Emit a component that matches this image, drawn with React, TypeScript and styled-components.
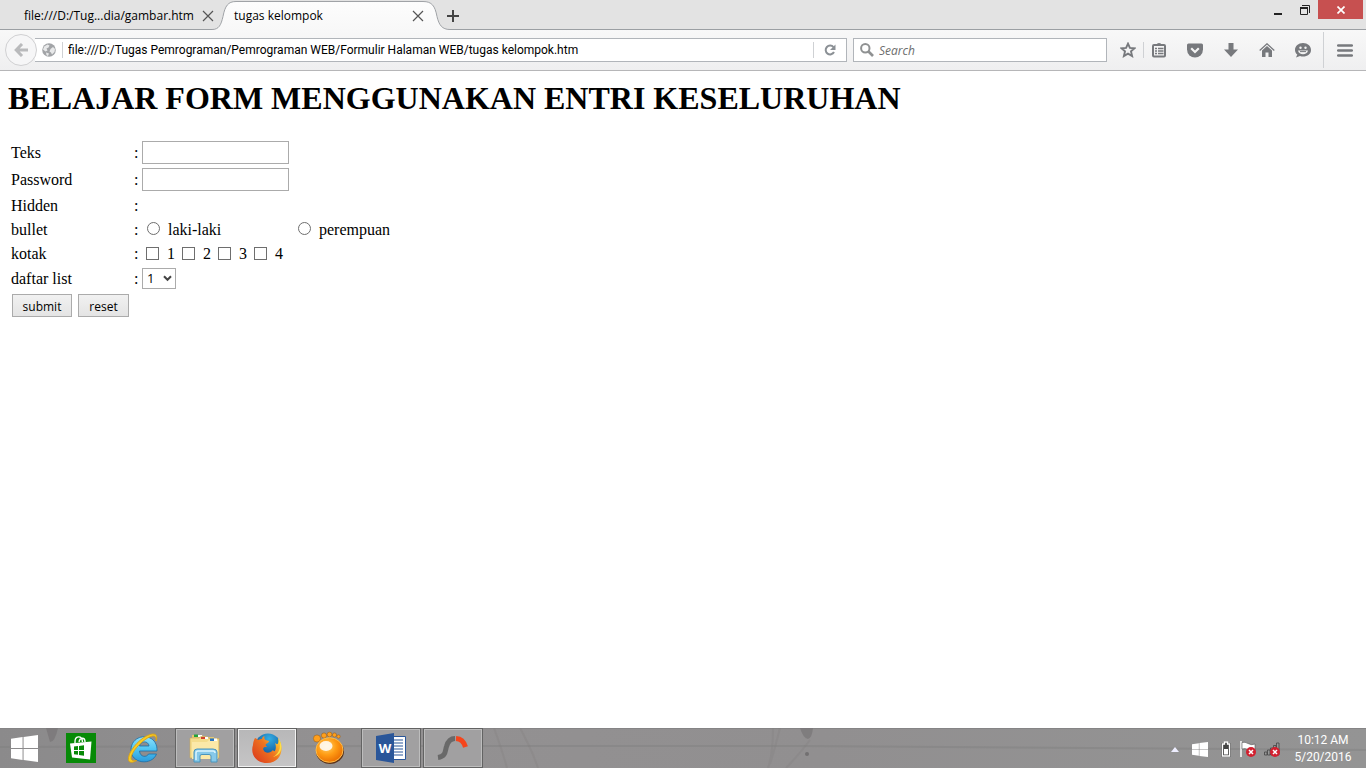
import React from "react";
import styled, { createGlobalStyle, css } from "styled-components";

const ui = `"Open Sans", "Noto Sans", sans-serif`;
const narrowUi = `Roboto, "Open Sans", sans-serif`;
const serif = `"Liberation Serif", "Times New Roman", serif`;

const GlobalStyle = createGlobalStyle`
  * { box-sizing: border-box; }
  html, body, #root { height: 100%; margin: 0; }
  body { background: #fff; color: #000; }
  button, input, select { margin: 0; padding: 0; border: 0; border-radius: 0; color: inherit; font: inherit; background: none; outline: none; }
  svg { display: block; flex: none; }
`;

const Window = styled.div`
  display: flex;
  flex-direction: column;
  min-height: 100%;
`;

/* ---------- browser chrome ---------- */

const TabStrip = styled.header`
  display: flex;
  height: 30px;
  background: #e3e3e3;
  box-shadow: inset 0 -1px #9b9fa3;
  font: 12px/16px ${ui};
`;

const Tab = styled.div<{ $active?: boolean }>`
  position: relative;
  display: flex;
  align-items: center;
  justify-content: space-between;
  width: ${(p) => (p.$active ? 238 : 216)}px;
  height: 30px;
  margin-left: ${(p) => (p.$active ? "-4px" : 0)};
  padding: ${(p) => (p.$active ? "2px 25px 0 22px" : "2px 1px 0 24px")};
  white-space: nowrap;
`;

const TabShape = styled.svg`
  position: absolute;
  inset: 0;
`;

const TabTitle = styled.span`
  position: relative;
`;

const IconButton = styled.button<{ $width: number }>`
  position: relative;
  display: flex;
  align-items: center;
  justify-content: center;
  flex: none;
  width: ${(p) => p.$width}px;
  height: 24px;
`;

const NewTab = styled(IconButton)`
  height: 30px;
  padding-top: 2px;
  margin-left: -11px;
`;

const WindowControls = styled.div`
  display: flex;
  margin-left: auto;
  padding-right: 3px;
`;

const WindowButton = styled(IconButton)<{ $close?: boolean }>`
  height: 19px;
  background: ${(p) => (p.$close ? "#c75050" : "transparent")};
`;

const Toolbar = styled.nav`
  display: flex;
  align-items: center;
  height: 41px;
  padding-left: 5px;
  background: linear-gradient(#f8f8f8, #efeff0);
  border-bottom: 1px solid #b6b6b8;
  font: 12px/16px ${ui};
`;

const BackButton = styled(IconButton)`
  z-index: 1;
  height: 32px;
  margin-right: -2px;
  border: 1px solid #d0d0d2;
  border-radius: 50%;
  background: #f6f6f7;
`;

const fieldBox = css`
  display: flex;
  align-items: center;
  height: 24px;
  background: #fff;
  border: 1px solid #b1b5ba;
`;

const AddressBar = styled.div`
  ${fieldBox}
  flex: 1;
  min-width: 0;
  border-left: 0;
  padding-left: 7px;
`;

const AddressInput = styled.input`
  flex: 1;
  min-width: 0;
  height: 20px;
  padding-left: 5px;
  font-family: ${narrowUi};
`;

const SearchBar = styled.label`
  ${fieldBox}
  flex: 0 1 254px;
  margin: 0 6px;
  padding-left: 6px;
`;

const SearchInput = styled.input`
  flex: 1;
  min-width: 0;
  height: 20px;
  padding-left: 5px;
  &::placeholder { color: #6d6d6d; font-style: italic; opacity: 1; }
`;

const Divider = styled.span<{ $h: number; $gap?: string }>`
  flex: none;
  width: 1px;
  height: ${(p) => p.$h}px;
  margin: ${(p) => p.$gap || "0"};
  background: #cfd1d4;
`;

/* ---------- page ---------- */

const Page = styled.main`
  flex: 1;
  padding: 9px 8px 0;
  background: #fff;
  font: 16px/18px ${serif};
`;

const Heading = styled.h1`
  margin: 0 0 21px;
  font: bold 32px/37px ${serif};
`;

const FormTable = styled.table`
  border-spacing: 2px;
`;

const Row = styled.tr<{ $h: number }>`
  height: ${(p) => p.$h}px;
`;

const LabelCell = styled.th`
  width: 121px;
  padding: 1px;
  font-weight: normal;
  text-align: left;
`;

const Cell = styled.td`
  padding: 0 1px;
`;

const Line = styled.div`
  display: flex;
  align-items: center;
`;

const Colon = styled.span`
  width: 8px;
`;

const TextField = styled.input`
  width: 147px;
  height: 23px;
  padding: 0 3px;
  border: 1px solid #ababab;
`;

const Choice = styled.label<{ $width: number; $inset: number }>`
  display: flex;
  align-items: center;
  gap: 8px;
  width: ${(p) => p.$width}px;
  padding-left: ${(p) => p.$inset}px;
`;

const Tick = styled.input`
  appearance: none;
  flex: none;
  width: 13px;
  height: 13px;
  margin-bottom: 2px;
  background: #fff;
  border: 1px solid #6e6e6e;
  &[type="radio"] { margin-bottom: 4px; border-radius: 50%; }
  &:checked { background: #333; box-shadow: inset 0 0 0 2px #fff; }
`;

const SelectBox = styled.div`
  position: relative;
`;

const Select = styled.select`
  appearance: none;
  display: block;
  width: 34px;
  height: 21px;
  padding-left: 4px;
  border: 1px solid #ababab;
  background: #fff;
  font: 13px/19px ${ui};
`;

const SelectArrow = styled.svg`
  position: absolute;
  top: 7px;
  right: 4px;
  pointer-events: none;
`;

const FormButton = styled.button<{ $width: number }>`
  width: ${(p) => p.$width}px;
  height: 23px;
  padding-top: 2px;
  border: 1px solid #ababab;
  background: linear-gradient(#f1f1f1, #e4e4e4);
  font: 12px/19px ${ui};
`;

const Buttons = styled.div`
  display: flex;
  gap: 6px;
  padding: 0 1px;
`;

/* ---------- taskbar ---------- */

const Taskbar = styled.footer`
  position: relative;
  display: flex;
  height: 40px;
  overflow: hidden;
  background: linear-gradient(90deg, #8b8a8b, #939192 25%, #918f90 60%, #949494);
  box-shadow: inset 0 1px #858485;
`;

const Wallpaper = styled.svg`
  position: absolute;
  inset: 0;
`;

const Apps = styled.div`
  position: relative;
  display: flex;
  gap: 2px;
`;

const TaskButton = styled.button<{ $state?: "open" | "front"; $start?: boolean }>`
  display: flex;
  align-items: center;
  justify-content: center;
  width: ${(p) => (p.$start ? 49 : 60)}px;
  height: 40px;
  ${(p) =>
    p.$state &&
    css`
      border: 1px solid #636363;
      box-shadow: inset 0 0 0 1px ${p.$state === "front" ? "#f2f2f2" : "#bdbdbd"};
      background: ${p.$state === "front" ? "linear-gradient(#b7b7b8, #c6c5c6)" : "#a1a0a1"};
    `}
`;

const Tray = styled.div`
  position: relative;
  display: flex;
  align-items: center;
  margin-left: auto;
  padding: 2px 7px 0 0;
`;

const Clock = styled.time`
  width: 72px;
  color: #fff;
  font: 12px/17px ${narrowUi};
  text-align: center;
  white-space: nowrap;
`;

const CloseX = () => (
  <svg width="12" height="12" viewBox="0 0 12 12" stroke="#555" strokeWidth="1.2">
    <path d="M1 1 11 11M11 1 1 11" />
  </svg>
);

const WinLogo = ({ size, h }: { size: number; h: number }) => (
  <svg width={size} height={h} viewBox="0 0 28 28" preserveAspectRatio="none" fill="#fff">
    <path d="M0 4 12 2.2V13.5H0zM13 2 28 0V13.5H13zM0 14.5H12V25.8L0 24zM13 14.5H28V28L13 26z" />
  </svg>
);

const RedX = () => (
  <>
    <circle cx="11" cy="11" r="5" fill="#d2202f" />
    <path d="M9 9 13 13M13 9 9 13" stroke="#fff" strokeWidth="1.5" />
  </>
);

const g = "#77797d";

function BrowserTabs() {
  return (
    <TabStrip>
      <Tab>
        <TabTitle>file:///D:/Tug...dia/gambar.htm</TabTitle>
        <IconButton $width={14} aria-label="Close tab"><CloseX /></IconButton>
      </Tab>
      <Tab $active>
        <TabShape width="238" height="30" viewBox="0 0 238 30">
          <defs>
            <linearGradient id="tab" x1="0" y1="0" x2="0" y2="1">
              <stop offset="0" stopColor="#fdfdfd" />
              <stop offset="1" stopColor="#f8f8f8" />
            </linearGradient>
          </defs>
          <path d="M0 30V29.5C7 29.5 9 25 11 16.5C13 6 16 1.5 24 1.5H211C220 1.5 223 6 225 16.5C227 25 230 29.5 238 29.5V30Z" fill="url(#tab)" />
          <path d="M0 29.5C7 29.5 9 25 11 16.5C13 6 16 1.5 24 1.5H211C220 1.5 223 6 225 16.5C227 25 230 29.5 238 29.5" fill="none" stroke="#a0a3a7" />
        </TabShape>
        <TabTitle>tugas kelompok</TabTitle>
        <IconButton $width={14} aria-label="Close tab"><CloseX /></IconButton>
      </Tab>
      <NewTab $width={28} aria-label="New tab">
        <svg width="12" height="12" viewBox="0 0 12 12" stroke="#444" strokeWidth="2"><path d="M6 0V12M0 6H12" /></svg>
      </NewTab>
      <WindowControls>
        <WindowButton $width={26} aria-label="Minimize">
          <svg width="10" height="12"><path d="M1 9h8v2H1z" fill="#222" /></svg>
        </WindowButton>
        <WindowButton $width={27} aria-label="Restore">
          <svg width="12" height="12" viewBox="0 0 12 12" fill="none" stroke="#222"><path d="M3 1.5H10.5V9" /><path d="M1.5 4H8.5V10.5H1.5z" /><path d="M1 4H9" strokeWidth="2" /></svg>
        </WindowButton>
        <WindowButton $width={45} $close aria-label="Close">
          <svg width="8" height="8" viewBox="0 0 8 8" stroke="#fff" strokeWidth="1.7"><path d="M.5 .5 7.5 7.5M7.5 .5 .5 7.5" /></svg>
        </WindowButton>
      </WindowControls>
    </TabStrip>
  );
}

function BrowserToolbar() {
  return (
    <Toolbar>
      <BackButton $width={32} aria-label="Back">
        <svg width="14" height="14" viewBox="0 0 14 14" fill="none" stroke="#b9babc" strokeWidth="3"><path d="M8 1 2.2 7 8 13M2.5 7H14" /></svg>
      </BackButton>
      <AddressBar>
        <svg width="14" height="14" viewBox="0 0 14 14">
          <circle cx="7" cy="7" r="6.8" fill="#a2a4a7" />
          <path d="M2.2 3.5 5.5 1.5 7.5 2.5 6.5 4.5 4.5 5.5 5.5 7.5 3.5 8.5 1 6.5zM8.5 6 11 4 13 6 12.5 9 10 11.5 9 9.5 7.5 8.5zM4 9.5 7 10.5 6 13 4.5 12.2z" fill="#e8e9ea" />
        </svg>
        <Divider $h={16} $gap="0 0 0 6px" />
        <AddressInput aria-label="Address" defaultValue="file:///D:/Tugas Pemrograman/Pemrograman WEB/Formulir Halaman WEB/tugas kelompok.htm" />
        <Divider $h={16} />
        <IconButton $width={32} aria-label="Reload">
          <svg width="12" height="12" viewBox="0 0 12 12"><path d="M9.5 3.2A4.4 4.4 0 1 0 10 8" fill="none" stroke="#8b9095" strokeWidth="2" /><path d="M11.5 .5V6H6z" fill="#8b9095" /></svg>
        </IconButton>
      </AddressBar>
      <SearchBar>
        <svg width="14" height="14" viewBox="0 0 14 14" fill="none" stroke="#8f9192"><circle cx="5.3" cy="5.3" r="4.2" strokeWidth="2" /><path d="M8.5 8.5 13 13" strokeWidth="2.6" /></svg>
        <SearchInput aria-label="Search" placeholder="Search" />
      </SearchBar>
      <IconButton $width={30} aria-label="Bookmark this page">
        <svg width="16" height="16" viewBox="0 0 16 16" fill="none" stroke={g} strokeWidth="1.9"><path d="M8 1.7 9.9 5.9 14.5 6.3 11 9.4 12.1 14 8 11.6 3.9 14 5 9.4 1.5 6.3 6.1 5.9z" /></svg>
      </IconButton>
      <Divider $h={16} $gap="0 -3px 0 0" />
      <IconButton $width={36} aria-label="Bookmarks">
        <svg width="14" height="16" viewBox="0 0 14 16"><path d="M4.5 3.5C4.5 .3 9.5 .3 9.5 3.5" fill={g} /><rect x="1" y="3" width="12" height="11.5" rx="1" fill="none" stroke={g} strokeWidth="2" /><path d="M3 6.5H5M6 6.5H11.5M3 9H5M6 9H11.5M3 11.5H5M6 11.5H11.5" stroke={g} strokeWidth="1.3" /></svg>
      </IconButton>
      <IconButton $width={36} aria-label="Pocket">
        <svg width="16" height="15" viewBox="0 0 16 15"><path d="M1.5 .5H14.5Q16 .5 16 2V6.5A8 8 0 0 1 0 6.5V2Q0 .5 1.5 .5z" fill={g} /><path d="M4.2 5.3 8 9 11.8 5.3" fill="none" stroke="#f4f4f4" strokeWidth="2.2" /></svg>
      </IconButton>
      <IconButton $width={36} aria-label="Downloads">
        <svg width="14" height="14" viewBox="0 0 14 14" fill={g}><path d="M4.5 0H9.5V6.5H14L7 14 0 6.5H4.5z" /></svg>
      </IconButton>
      <IconButton $width={36} aria-label="Home">
        <svg width="16" height="14" viewBox="0 0 16 14"><path d="M.7 7.5 8 .8 15.3 7.5" fill="none" stroke={g} strokeWidth="1.3" /><path d="M3 7.5 8 3 13 7.5V14H9.5V9.5H6.5V14H3z" fill={g} /></svg>
      </IconButton>
      <IconButton $width={36} aria-label="Chat">
        <svg width="16" height="15" viewBox="0 0 16 15"><path d="M8 0C12.6 0 16 3 16 6.9S12.6 13.5 8 13.5C7 13.5 6 13.4 5 13L1 14.5 2.3 11.5C.8 10.3 0 8.7 0 6.9 0 3 3.4 0 8 0z" fill={g} /><circle cx="5.5" cy="4.8" r="1.2" fill="#f2f2f2" /><circle cx="10.5" cy="4.8" r="1.2" fill="#f2f2f2" /><path d="M3 7.5H13C12.5 10 10.5 11.3 8 11.3S3.5 10 3 7.5z" fill="#f2f2f2" /><path d="M5 8.6H11" stroke={g} /></svg>
      </IconButton>
      <Divider $h={36} $gap="0 0 0 2px" />
      <IconButton $width={42} aria-label="Menu">
        <svg width="16" height="13" viewBox="0 0 16 13" stroke={g} strokeWidth="2.6" strokeLinecap="round"><path d="M1.2 1.5H14.8M1.2 6.5H14.8M1.2 11.5H14.8" /></svg>
      </IconButton>
    </Toolbar>
  );
}

function EntryForm() {
  return (
    <form onSubmit={(e) => e.preventDefault()}>
      <FormTable>
        <tbody>
          <Row $h={25}>
            <LabelCell><label htmlFor="teks">Teks</label></LabelCell>
            <Cell><Line><Colon>:</Colon><TextField id="teks" type="text" /></Line></Cell>
          </Row>
          <Row $h={25}>
            <LabelCell><label htmlFor="password">Password</label></LabelCell>
            <Cell><Line><Colon>:</Colon><TextField id="password" type="password" /></Line></Cell>
          </Row>
          <Row $h={23}>
            <LabelCell>Hidden</LabelCell>
            <Cell><Line><Colon>:</Colon><input type="hidden" name="hidden" /></Line></Cell>
          </Row>
          <Row $h={22}>
            <LabelCell>bullet</LabelCell>
            <Cell>
              <Line>
                <Colon>:</Colon>
                <Choice $width={151} $inset={5}><Tick type="radio" name="bullet" />laki-laki</Choice>
                <Choice $width={104} $inset={5}><Tick type="radio" name="bullet" />perempuan</Choice>
              </Line>
            </Cell>
          </Row>
          <Row $h={22}>
            <LabelCell>kotak</LabelCell>
            <Cell>
              <Line>
                <Colon>:</Colon>
                {[1, 2, 3, 4].map((n) => (
                  <Choice key={n} $width={36} $inset={4}><Tick type="checkbox" name="kotak" />{n}</Choice>
                ))}
              </Line>
            </Cell>
          </Row>
          <Row $h={23}>
            <LabelCell><label htmlFor="daftar">daftar list</label></LabelCell>
            <Cell>
              <Line>
                <Colon>:</Colon>
                <SelectBox>
                  <Select id="daftar"><option>1</option></Select>
                  <SelectArrow width="9" height="7" viewBox="0 0 9 7" fill="none" stroke="#444" strokeWidth="2"><path d="M1 1.2 4.5 4.8 8 1.2" /></SelectArrow>
                </SelectBox>
              </Line>
            </Cell>
          </Row>
          <Row $h={27}>
            <Cell colSpan={2}>
              <Buttons>
                <FormButton $width={60} type="submit">submit</FormButton>
                <FormButton $width={51} type="reset">reset</FormButton>
              </Buttons>
            </Cell>
          </Row>
        </tbody>
      </FormTable>
    </form>
  );
}

function StoreIcon() {
  return (
    <svg width="30" height="30" viewBox="0 0 30 30">
      <path d="M0 0H30V30H0z" fill="#078a07" />
      <path d="M9 10C8.5 2 16 2 16.5 9M13 9C14 4 19 4 19 9" fill="none" stroke="#fff" strokeWidth="1.4" />
      <path d="M4 10.5 25.5 8.5 24 26.5 6 24.5z" fill="#fff" />
      <path d="M8 13.5 12 13V17H8zM13 12.9 18 12.3V17H13zM8 18H12V21.8L8 21.3zM13 18H18V22.7L13 22z" fill="#078a07" />
    </svg>
  );
}

function IeIcon() {
  return (
    <svg width="32" height="32" viewBox="0 0 32 32">
      <defs><linearGradient id="ie" x1="0" y1="0" x2="0" y2="1"><stop offset="0" stopColor="#8de0fb" /><stop offset=".5" stopColor="#4fc4f2" /><stop offset="1" stopColor="#2b9bdc" /></linearGradient></defs>
      <path d="M30 19H12.5C13 25.5 20 25.5 21.5 22H29.5C25 34 3.5 32 4 17.500 4.5 .5 31 0 30 19zM12.500 14H22C21.500 8.500 13.500 8.500 12.500 14z" fill="url(#ie)" stroke="#1b6ea8" strokeWidth=".8" />
      <path d="M29 9C31 4 29 1 24 2.3 15 4 3 17 1.5 25.5 .5 31 5 31.5 9.5 28.5 4 29.5 2.8 27 5.5 21.5 10 13 20 5 25.5 4 28.5 3.5 29.5 5.5 29 9z" fill="#f9cc23" stroke="#d9a016" strokeWidth=".9" />
    </svg>
  );
}

function ExplorerIcon() {
  return (
    <svg width="32" height="30" viewBox="0 0 32 30">
      <path d="M3 2H13L15 4H25V26H3z" fill="#e5c871" />
      <path d="M5 1.5H9V4H5z" fill="#23a33a" /><path d="M9 2H13V4H9z" fill="#fff" />
      <path d="M1 5H10L12 3.5H18L20 5.5H30V25H1z" fill="#f4dd8d" stroke="#c9a856" strokeWidth=".6" />
      <path d="M12 4H16V6H12z" fill="#d3432d" /><path d="M16 4H19V6H16z" fill="#fff" />
      <path d="M3 9H18L20 7H29V26H3z" fill="#fbe9a8" />
      <path d="M21 5.5H25V8H21z" fill="#2776c4" /><path d="M25 5.5H28V8H25z" fill="#fff" />
      <path d="M5 29V19Q5 16 8 16H24Q28 16 28 19V29H22V23Q22 21.5 20 21.5H13Q11 21.5 11 23V29z" fill="#86c9e9" stroke="#4a95bd" />
      <path d="M7 27V20Q7 18 9 18H24Q26 18 26 20" fill="none" stroke="#d9f4fd" strokeWidth="1.5" />
    </svg>
  );
}

function FirefoxIcon() {
  return (
    <svg width="32" height="32" viewBox="0 0 32 32">
      <defs>
        <radialGradient id="world" cx=".55" cy=".2" r=".8"><stop offset="0" stopColor="#35aee3" /><stop offset="1" stopColor="#07418c" /></radialGradient>
        <linearGradient id="fox" x1="0" x2="1" y1="1" y2=".2"><stop offset="0" stopColor="#d9321c" /><stop offset=".6" stopColor="#ee7520" /><stop offset="1" stopColor="#ffd83a" /></linearGradient>
      </defs>
      <circle cx="17" cy="14.5" r="13" fill="url(#world)" />
      <path d="M4 6C5 6 6 7 7 8 9 7 10 7 11 7 11 5.5 12 4.5 13.5 4 13 6 13.5 7 14.5 8L18 9C18 11 15 11.5 14.5 13L16 15C13 14.5 11.5 15.5 12.5 18 14 22 20 21 22 18 24 22 26 15 24 11 27 14 28 10 27 6 34 14 31 31 16 31 5 31 -1 22 2 13 2 10 3 8 4 6z" fill="url(#fox)" />
      <path d="M27 6C31 12 29 22 22 25 32 23 32 12 27 6z" fill="#ffdf44" />
    </svg>
  );
}

function GomIcon() {
  return (
    <svg width="34" height="34" viewBox="0 0 34 34">
      <defs><radialGradient id="gom" cx=".4" cy=".35" r=".7"><stop offset="0" stopColor="#ffd16a" /><stop offset=".5" stopColor="#ff9c14" /><stop offset="1" stopColor="#e86a00" /></radialGradient></defs>
      <ellipse cx="18" cy="20.5" rx="14" ry="12.5" fill="#5b321a" />
      <g fill="#ff9f1c" stroke="#97560f" strokeWidth=".5"><circle cx="5" cy="7.5" r="3.6" /><circle cx="12" cy="4.5" r="2.6" /><circle cx="17.5" cy="3.5" r="2.4" /><circle cx="22.5" cy="4" r="2.1" /><circle cx="26.5" cy="5.5" r="1.7" /></g>
      <ellipse cx="17.5" cy="19" rx="13.5" ry="12.3" fill="url(#gom)" stroke="#ffbd48" />
      <ellipse cx="14" cy="15" rx="6.5" ry="5" fill="#fff" opacity=".85" />
    </svg>
  );
}

const WordLetter = styled.text`
  font: bold 13px ${ui};
`;

function WordIcon() {
  return (
    <svg width="32" height="32" viewBox="0 0 32 32">
      <path d="M18 4.5H30.5V27.5H18z" fill="#fff" stroke="#2a5699" />
      <path d="M18 8H28M18 11H28M18 14H28M18 17H28M18 20H28M18 23H28" stroke="#2a5699" strokeWidth="1.2" />
      <path d="M1 4 19 1V31L1 28z" fill="#2a5699" />
      <WordLetter x="10" y="20.5" textAnchor="middle" fill="#fff">W</WordLetter>
    </svg>
  );
}

function Desktop() {
  return (
    <Taskbar>
      <Wallpaper width="100%" height="40" fill="none" stroke="#7e7c7d" aria-hidden="true">
        <path d="M0 19 400 18 800 18 1366 22" strokeWidth="2" opacity=".4" />
        <path d="M494 0Q502 22 507 40M520 0Q532 22 538 40M773 0Q773 26 768 40M780 0Q775 20 770 36M810 12Q798 28 786 40" strokeWidth="2" opacity=".25" />
        <path d="M46 0H58Q55 14 50 14zM800 0H813Q812 10 808 11 803 10 800 0z" fill="#777576" stroke="none" opacity=".7" />
        <circle cx="807" cy="26" r="2" fill="#727071" stroke="none" />
      </Wallpaper>
      <Apps>
        <TaskButton $start aria-label="Start"><WinLogo size={27} h={27} /></TaskButton>
        <TaskButton aria-label="Store"><StoreIcon /></TaskButton>
        <TaskButton aria-label="Internet Explorer"><IeIcon /></TaskButton>
        <TaskButton $state="open" aria-label="File Explorer"><ExplorerIcon /></TaskButton>
        <TaskButton $state="front" aria-label="Firefox"><FirefoxIcon /></TaskButton>
        <TaskButton aria-label="GOM Player"><GomIcon /></TaskButton>
        <TaskButton $state="open" aria-label="Word"><WordIcon /></TaskButton>
        <TaskButton $state="open" aria-label="Smadav">
          <svg width="32" height="26" viewBox="0 0 32 26" fill="none" strokeWidth="5"><path d="M1 22.5C9 21.5 8 16 9.5 11.5 11 6 14 3.5 18 3.5" stroke="#696969" /><path d="M19 3.5C24 3.8 27 7 28.5 12" stroke="#f5451c" /></svg>
        </TaskButton>
      </Apps>
      <Tray>
        <IconButton $width={24} aria-label="Show hidden icons"><svg width="8" height="5"><path d="M0 5 4 0 8 5z" fill="#eef" /></svg></IconButton>
        <IconButton $width={26} aria-label="Get Windows"><WinLogo size={16} h={15} /></IconButton>
        <IconButton $width={26} aria-label="Battery">
          <svg width="10" height="16" viewBox="0 0 10 16"><path d="M3 0H7V2H9.5V16H.5V2H3z" fill="#444" /><path d="M3.500 1H6.500V3H8.500V15H1.500V3H3.500z" fill="none" stroke="#fff" strokeWidth="1.3" /><path d="M3 8H7V13.500H3z" fill="#fff" /></svg>
        </IconButton>
        <IconButton $width={18} aria-label="Action Center">
          <svg width="16" height="16" viewBox="0 0 16 16"><path d="M1 0V16" stroke="#fff" strokeWidth="1.5" /><path d="M2 1.5Q5 .5 8 2.5T15 3V9.5Q11 10 8 8.5T2 8z" fill="#fff" stroke="#555" strokeWidth=".6" /><RedX /></svg>
        </IconButton>
        <IconButton $width={30} aria-label="Network">
          <svg width="16" height="16" viewBox="0 0 16 16"><path d="M.5 11H3V14H.5zM3.5 9H6V14H3.5zM6.5 7H9V14H6.5zM9.5 4.5H12V14H9.5zM12.5 2H15V14H12.5z" fill="#999" stroke="#444" strokeWidth=".8" /><RedX /></svg>
        </IconButton>
        <Clock>10:12 AM<br />5/20/2016</Clock>
      </Tray>
    </Taskbar>
  );
}

export default function App() {
  return (
    <>
      <GlobalStyle />
      <Window>
        <BrowserTabs />
        <BrowserToolbar />
        <Page>
          <Heading>BELAJAR FORM MENGGUNAKAN ENTRI KESELURUHAN</Heading>
          <EntryForm />
        </Page>
        <Desktop />
      </Window>
    </>
  );
}
